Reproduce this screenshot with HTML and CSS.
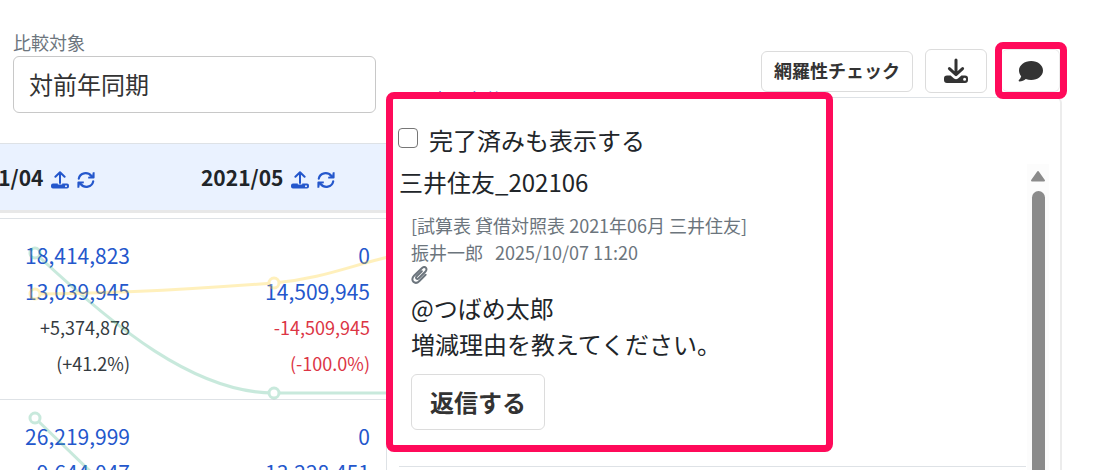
FILE: index.html
```
<!DOCTYPE html>
<html lang="ja">
<head>
    <meta charset="UTF-8">
    <meta name="viewport" content="width=device-width, initial-scale=1.0">
    <title>試算表</title>
    <link rel="stylesheet" href="styles.css">
</head>
<body>
    <svg class="sprite" aria-hidden="true">
        <symbol id="icon-upload" viewBox="0 0 18 18">
            <path d="M9 12V2M4.4 5.8L9 1.2L13.6 5.8" fill="none" stroke="currentColor" stroke-width="2" stroke-linecap="round" stroke-linejoin="round"/>
            <path fill-rule="evenodd" d="M2 12.4H6.8V13.6H11.2V12.4H16Q18 12.4 18 14.4V15.6Q18 17.6 16 17.6H2Q0 17.6 0 15.6V14.4Q0 12.4 2 12.4ZM15 14.2A1 1 0 1 0 15 16.2A1 1 0 1 0 15 14.2Z" fill="currentColor"/>
        </symbol>
        <symbol id="icon-refresh" viewBox="0 0 18 18">
            <path d="M1.8 7.6C3 1.6 10.6.4 14.4 5M16.2 10.4C15 16.4 7.4 17.6 3.6 13" fill="none" stroke="currentColor" stroke-width="2.2" stroke-linecap="round"/>
            <path d="M17.6 1.2V6.6Q17.6 7.6 16.6 7.6H11.2V5.8L15 5.2L15.8 1.2ZM.4 16.8V11.4Q.4 10.4 1.4 10.4H6.8V12.2L3 12.8L2.2 16.8Z" fill="currentColor"/>
        </symbol>
    </svg>

    <header class="toolbar">
        <div class="compare">
            <label for="compare">比較対象</label>
            <select id="compare">
                <option>対前年同期</option>
            </select>
        </div>
        <div class="actions">
            <button class="btn btn-check" type="button">網羅性チェック</button>
            <button class="btn btn-icon" type="button" aria-label="ダウンロード">
                <svg width="26" height="26" viewBox="0 0 26 26">
                    <path d="M13 2V16M6.4 10.6L13 16.6L19.6 10.6" fill="none" stroke="currentColor" stroke-width="3" stroke-linecap="round" stroke-linejoin="round"/>
                    <path fill-rule="evenodd" d="M4 17.6H7.6L11 20.6Q13 22 15 20.6L18.4 17.6H22Q25 17.6 25 20.4V22Q25 25 22 25H4Q1 25 1 22V20.4Q1 17.6 4 17.6ZM21.6 19.8A1.5 1.5 0 1 0 21.6 22.8A1.5 1.5 0 1 0 21.6 19.8Z" fill="currentColor"/>
                </svg>
            </button>
            <div class="comment-toggle">
                <button class="btn btn-icon" type="button" aria-label="コメント">
                    <svg width="26" height="26" viewBox="0 0 26 26">
                        <path d="M13.2 3C19.8 3 25 7.2 25 12.5S19.8 22 13.2 22C11.2 22 9.4 21.6 7.8 20.9C6.2 22.2 3.8 23.4 1.4 23.4C.6 23.4.4 22.6.9 22.1C1.8 21.2 2.8 19.6 3.2 18.2C1.8 16.6 1 14.6 1 12.5C1 7.2 6.6 3 13.2 3Z" fill="currentColor"/>
                    </svg>
                </button>
            </div>
        </div>
    </header>

    <a class="condition-link" href="#">表示条件</a>

    <main class="report">
        <table class="trial">
            <thead>
                <tr>
                    <th>
                        <span>2021/04</span>
                        <a href="#" aria-label="アップロード"><svg class="icon"><use href="#icon-upload"/></svg></a>
                        <a href="#" aria-label="更新"><svg class="icon"><use href="#icon-refresh"/></svg></a>
                    </th>
                    <th>
                        <span>2021/05</span>
                        <a href="#" aria-label="アップロード"><svg class="icon"><use href="#icon-upload"/></svg></a>
                        <a href="#" aria-label="更新"><svg class="icon"><use href="#icon-refresh"/></svg></a>
                    </th>
                </tr>
            </thead>
            <tbody>
                <tr class="spacer"><td colspan="2"></td></tr>
                <tr>
                    <td>
                        <a class="amount" href="#">18,414,823</a>
                        <a class="amount" href="#">13,039,945</a>
                        <div class="diff">+5,374,878</div>
                        <div class="diff">(+41.2%)</div>
                    </td>
                    <td>
                        <a class="amount" href="#">0</a>
                        <a class="amount" href="#">14,509,945</a>
                        <div class="diff minus">-14,509,945</div>
                        <div class="diff minus">(-100.0%)</div>
                    </td>
                </tr>
                <tr>
                    <td>
                        <a class="amount" href="#">26,219,999</a>
                        <a class="amount" href="#">9,644,047</a>
                    </td>
                    <td>
                        <a class="amount" href="#">0</a>
                        <a class="amount" href="#">13,228,451</a>
                    </td>
                </tr>
            </tbody>
        </table>
        <!-- 推移グラフ -->
        <svg class="trend" width="480" height="252" viewBox="0 218 480 252" aria-hidden="true">
            <g fill="none" stroke-width="3">
                <g stroke="#4bb98e">
                    <path d="M35 253C115 328 195 393 274 393H480"/>
                    <path d="M35 418L92 473"/>
                    <g fill="#fff">
                        <circle cx="35" cy="253" r="5"/>
                        <circle cx="274" cy="393" r="5"/>
                        <circle cx="35" cy="418" r="5"/>
                    </g>
                </g>
                <g stroke="#ffd024">
                    <path d="M35 294C115 294 195 289 274 283C320 279 350 266 388 257"/>
                    <g fill="#fff">
                        <circle cx="35" cy="294" r="5"/>
                        <circle cx="274" cy="283" r="5"/>
                    </g>
                </g>
            </g>
        </svg>
    </main>

    <aside class="panel">
        <section class="thread">
            <label class="show-done"><input type="checkbox"> 完了済みも表示する</label>
            <h2>三井住友_202106</h2>
            <div class="comment">
                <div class="meta">[試算表 貸借対照表 2021年06月 三井住友]</div>
                <div class="meta"><span>振井一郎</span><span>2025/10/07 11:20</span></div>
                <svg class="clip" width="18" height="18" viewBox="0 0 18 18">
                    <path d="M10.8 5.2L5.7 10.3C4 12 6 14 7.7 12.3L14.3 5.7C17.4 2.6 13.8-.6 10.8 2.2L3 9.8C-1.4 14.2 4 19.4 8.4 15L14.6 8.8" fill="none" stroke="currentColor" stroke-width="2" stroke-linecap="round"/>
                </svg>
                <p>@つばめ太郎<br>増減理由を教えてください。</p>
                <button class="btn btn-reply" type="button">返信する</button>
            </div>
        </section>
        <hr>
        <div class="scrollbar">
            <svg width="16" height="12" viewBox="0 0 16 12"><path d="M8 2L14 10.5H2Z" fill="#8b8b8b" stroke="#8b8b8b" stroke-width="2" stroke-linejoin="round"/></svg>
            <div class="thumb"></div>
        </div>
    </aside>
</body>
</html>
```
FILE: styles.css
```
* {
    box-sizing: border-box;
}

body {
    position: relative;
    margin: 0;
    height: 100vh;
    overflow: hidden;
    font-family: "Noto Sans CJK JP", sans-serif;
    font-size: 24px;
    line-height: 36px;
    color: #212529;
    background-color: #fff;
}

a {
    color: #2457cc;
    text-decoration: none;
}

.sprite {
    position: absolute;
    width: 0;
    height: 0;
}

.toolbar {
    display: flex;
    justify-content: space-between;
    padding: 30px 32px 30px 13px;
}

.compare {
    display: flex;
    flex-direction: column;
    gap: 2px;
    width: 363px;
}

.compare label {
    font-size: 18px;
    line-height: 24px;
    color: #6c757d;
}

.compare select {
    appearance: none;
    height: 57px;
    padding: 0 15px 2px;
    font-family: inherit;
    font-size: 24px;
    color: #333;
    background-color: #fff;
    border: 1px solid #c8c8c8;
    border-radius: 6px;
}

.actions {
    display: flex;
    align-items: center;
    gap: 12px;
    height: 82px;
}

.btn {
    padding: 0 12px 2px;
    font-family: inherit;
    font-weight: bold;
    color: #333;
    background-color: #fff;
    border: 1px solid #dcdcdc;
    border-radius: 6px;
}

.btn-check {
    height: 41px;
    font-size: 18px;
}

.btn-icon {
    display: flex;
    align-items: center;
    justify-content: center;
    width: 62px;
    height: 44px;
    padding: 0;
}

/* 注目枠 */
.comment-toggle,
.thread {
    border: 7px solid #ff0a5a;
    border-radius: 8px;
}

.comment-toggle {
    position: relative;
    z-index: 2;
    margin: 0 -6px 1px -4px;
    background-color: #fff;
}

.comment-toggle .btn {
    width: 58px;
    height: 43px;
    border-color: #ececec;
    border-width: 1px 1px 1px 0;
}

.condition-link {
    position: absolute;
    top: 81px;
    left: 431px;
    font-size: 18px;
}

.report {
    position: relative;
    overflow: hidden;
}

.trial {
    width: 480px;
    margin-left: -92px;
    table-layout: fixed;
    border-collapse: separate;
    border-spacing: 0;
}

.trial th {
    height: 70px;
    padding: 0;
    font-size: 21px;
    background-color: #eaf2ff;
    border-top: 1px solid #dee2e6;
    border-bottom: 3px solid #e8e8e8;
}

.trial th a {
    margin-left: 3px;
}

.icon {
    width: 18px;
    height: 18px;
    vertical-align: -3px;
}

.trial td {
    padding: 18px;
    text-align: right;
    vertical-align: top;
    border-bottom: 1px solid #dee2e6;
}

.trial .spacer td {
    height: 6px;
    padding: 0;
}

.amount {
    display: block;
    font-size: 21px;
}

.diff {
    font-size: 18px;
    color: #343a40;
}

.minus {
    color: #dc3545;
}

.trend {
    position: absolute;
    top: 75px;
    left: 0;
    opacity: 0.3;
}

.panel {
    position: absolute;
    top: 97px;
    left: 386px;
    right: 31px;
    bottom: 0;
    background-color: #fff;
    border: 1px solid #dee2e6;
    border-right: 2px solid #ececec;
    border-bottom: 0;
    border-radius: 6px 6px 0 0;
}

.thread {
    width: 447px;
    margin: -6px 0 0 -1px;
    padding: 23px 5px 15px;
    background-color: #fff;
}

.show-done {
    display: flex;
    align-items: center;
    gap: 11px;
}

.show-done input {
    appearance: none;
    width: 20px;
    height: 20px;
    margin: 0 0 4px;
    border: 1px solid #767676;
    border-radius: 4px;
}

.show-done input:checked {
    background-color: #2457cc;
}

.thread h2 {
    margin: 6px 1px;
    font-size: 24px;
    font-weight: normal;
}

.comment {
    padding: 6px 13px 0;
}

.meta {
    display: flex;
    gap: 12px;
    font-size: 18px;
    line-height: 27px;
    color: #6c757d;
}

.clip {
    display: block;
    margin-bottom: 6px;
    color: #6c757d;
}

.comment p {
    margin: 0 0 12px;
}

.btn-reply {
    height: 56px;
    padding: 0 18px 2px;
    font-size: 24px;
}

.panel hr {
    margin: 14px 34px 0 12px;
    border: 0;
    border-top: 1px solid #dee2e6;
}

.scrollbar {
    position: absolute;
    top: 66px;
    right: 11px;
    bottom: 0;
    display: flex;
    flex-direction: column;
    align-items: center;
    gap: 9px;
    width: 22px;
    padding-top: 6px;
    background-color: #fcfcfc;
}

.thumb {
    flex: 1;
    width: 13px;
    background-color: #8b8b8b;
    border-radius: 7px 7px 0 0;
}
```
